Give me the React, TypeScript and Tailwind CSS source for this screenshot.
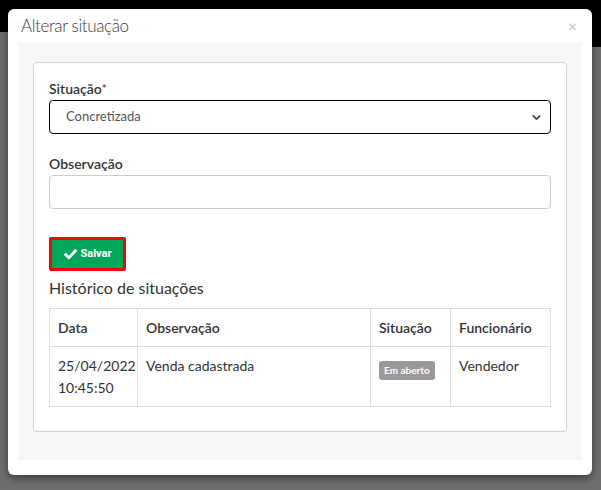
import { ChevronDown } from 'lucide-react';

export default function App() {
  const font = { fontFamily: 'Lato, "Open Sans", sans-serif' };

  return (
    <div className="relative w-[601px] h-[490px] overflow-hidden bg-[#6f6f6f]" style={font}>
      {/* backdrop */}
      <div className="absolute left-0 top-0 w-full h-[32px] bg-black" />
      <div className="absolute right-0 top-0 w-[20px] h-[47px] bg-black" />

      {/* modal */}
      <div className="absolute left-[8px] top-[9px] w-[584px] h-[466px] bg-white rounded-[6px] shadow-[0_3px_9px_rgba(0,0,0,0.5)] flex flex-col">
        <div className="h-[33px] flex items-center justify-between pl-[13px] pr-[15px]">
          <h4 className="text-[17px] text-[#3a3a3a] font-light tracking-[-0.4px]">Alterar situação</h4>
          <span className="text-[#c4c4c4] text-[16px] leading-none">×</span>
        </div>

        <div className="mx-[10px] bg-[#f7f7f7] pt-[20px] px-[15px] h-[418px]">
          <div className="bg-white border border-[#d2d2d2] rounded-[4px] h-[370px] px-[15px] pt-[16px]">
            {/* Situação */}
            <label className="block text-[14px] font-semibold text-[#333] leading-[20px]">
              Situação<span className="text-[#e00] text-[12px] align-top">*</span>
            </label>
            <div className="mt-[1px] h-[34px] border border-black rounded-[4px] flex items-center justify-between pl-[16px] pr-[7px]">
              <span className="text-[13px] text-[#555]">Concretizada</span>
              <ChevronDown size={13} strokeWidth={3.2} className="text-[#444]" />
            </div>

            {/* Observação */}
            <label className="block mt-[20px] text-[14px] font-semibold text-[#333] leading-[20px]">Observação</label>
            <div className="mt-[1px] h-[34px] border border-[#ccc] rounded-[4px]" />

            {/* Salvar */}
            <div className="mt-[28px] inline-flex border-[3px] border-[#ff0000] rounded-[2px]">
              <div className="h-[28px] w-[71px] bg-[#00a65a] flex items-center justify-center gap-[4px] text-white text-[11px] font-bold" style={{ fontFamily: 'Roboto, "Liberation Sans", sans-serif' }}>
                <svg width="13" height="12" viewBox="0 0 512 440" fill="white">
                  <path d="M173.9 431.4L7.5 265c-10-10-10-26.2 0-36.2l46.2-46.2c10-10 26.2-10 36.2 0L192 284.7 422.1 34.6c10-10 26.2-10 36.2 0l46.2 46.2c10 10 10 26.2 0 36.2L210.1 431.4c-10 10-26.2 10-36.2 0z" />
                </svg>
                Salvar
              </div>
            </div>

            <h3 className="mt-[6px] text-[16px] text-[#333] leading-[22px]">Histórico de situações</h3>

            {/* Tabela */}
            <table className="mt-[9px] w-full table-fixed border-collapse text-[14px] text-[#333]">
              <colgroup>
                <col className="w-[88px]" />
                <col className="w-[233px]" />
                <col className="w-[80px]" />
                <col />
              </colgroup>
              <thead>
                <tr className="h-[38px]">
                  <th className="border border-[#ddd] text-left font-semibold px-[8px]">Data</th>
                  <th className="border border-[#ddd] text-left font-semibold px-[8px]">Observação</th>
                  <th className="border border-[#ddd] text-left font-semibold px-[8px] whitespace-nowrap">Situação</th>
                  <th className="border border-[#ddd] text-left font-semibold px-[8px] whitespace-nowrap">Funcionário</th>
                </tr>
              </thead>
              <tbody>
                <tr className="h-[60px]">
                  <td className="border border-[#ddd] align-top px-[8px] pt-[8px] leading-[22px]">
                    25/04/2022
                    <br />
                    10:45:50
                  </td>
                  <td className="border border-[#ddd] align-top px-[8px] pt-[8px] leading-[22px]">Venda cadastrada</td>
                  <td className="border border-[#ddd] align-top px-[8px] pt-[11px]">
                    <span className="inline-block bg-[#999] text-white text-[10px] font-bold rounded-[3px] px-[5px] leading-[19px] whitespace-nowrap">Em aberto</span>
                  </td>
                  <td className="border border-[#ddd] align-top px-[8px] pt-[8px] leading-[22px]">Vendedor</td>
                </tr>
              </tbody>
            </table>
          </div>
        </div>
      </div>
    </div>
  );
}
